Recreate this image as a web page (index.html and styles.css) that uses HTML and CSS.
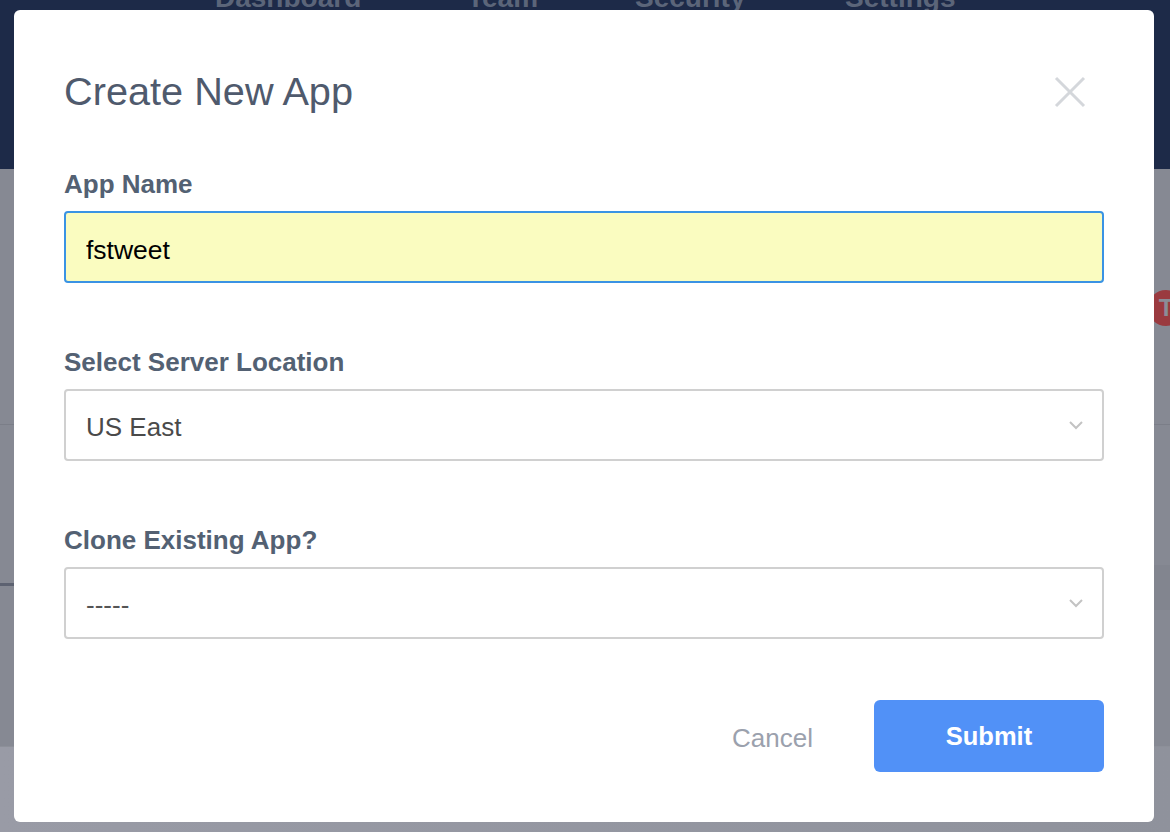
FILE: index.html
```html
<!DOCTYPE html>
<html lang="en">
<head>
<meta charset="utf-8">
<title>Create New App</title>
<link rel="stylesheet" href="styles.css">
</head>
<body>
<div class="app">
  <header class="topbar">
    <nav class="nav">
      <a class="nav-link">Dashboard</a>
      <a class="nav-link">Team</a>
      <a class="nav-link">Security</a>
      <a class="nav-link">Settings</a>
    </nav>
  </header>
  <main class="content">
    <section class="panel panel-top"><span class="avatar">T</span></section>
    <section class="panel panel-mid"><div class="chart-line"></div><div class="side-block"></div></section>
    <footer class="foot"></footer>
  </main>
</div>

<div class="overlay">
  <form class="modal">
    <div class="modal-head">
      <h1 class="modal-title">Create New App</h1>
      <button type="button" class="close" aria-label="Close">
        <svg width="32" height="32" viewBox="0 0 32 32"><path d="M2 2 L30 30 M30 2 L2 30" stroke="#d4d7db" stroke-width="3" fill="none"/></svg>
      </button>
    </div>

    <div class="field">
      <label class="label">App Name</label>
      <input class="control input" type="text" value="fstweet">
    </div>

    <div class="field">
      <label class="label">Select Server Location</label>
      <div class="select-wrap">
        <select class="control select"><option>US East</option></select>
        <svg class="chevron" width="16" height="10" viewBox="0 0 16 10"><path d="M2 2 L8 8 L14 2" stroke="#c3c3c3" stroke-width="2" fill="none"/></svg>
      </div>
    </div>

    <div class="field">
      <label class="label">Clone Existing App?</label>
      <div class="select-wrap">
        <select class="control select dashes"><option>-----</option></select>
        <svg class="chevron" width="16" height="10" viewBox="0 0 16 10"><path d="M2 2 L8 8 L14 2" stroke="#c3c3c3" stroke-width="2" fill="none"/></svg>
      </div>
    </div>

    <div class="actions">
      <button type="button" class="btn-cancel">Cancel</button>
      <button type="button" class="btn-submit">Submit</button>
    </div>
  </form>
</div>
</body>
</html>
```
FILE: styles.css
```css
* { box-sizing: border-box; }
html, body { margin: 0; padding: 0; }
body {
  font-family: "Liberation Sans", Arial, sans-serif;
  background: #868993;
  overflow: hidden;
}
.app {
  height: 832px;
  display: flex;
  flex-direction: column;
}
.topbar {
  height: 169px;
  background: #1d2a48;
  flex: none;
}
.nav {
  display: grid;
  grid-template-columns: 252px 168px 210px auto;
  padding-left: 215px;
  margin-top: -18px;
}
.nav-link {
  font-size: 28px;
  line-height: 32px;
  font-weight: bold;
  color: #5b6579;
}
.content {
  flex: 1;
  display: flex;
  flex-direction: column;
}
.panel-top {
  height: 256px;
  border-bottom: 1px solid #7b7e88;
  position: relative;
}
.avatar {
  position: absolute;
  right: -14px;
  top: 121px;
  width: 36px;
  height: 36px;
  border-radius: 50%;
  background: #9a3a3f;
  color: #8a8d97;
  font-weight: bold;
  font-size: 24px;
  line-height: 36px;
  text-align: center;
}
.panel-mid {
  flex: 1;
  position: relative;
  border-bottom: 1px solid #8d9099;
}
.chart-line {
  position: absolute;
  left: 0;
  top: 158px;
  width: 20px;
  height: 3px;
  background: #5d6271;
}
.side-block {
  position: absolute;
  right: 0;
  top: 140px;
  width: 20px;
  height: 45px;
  background: #82858f;
}
.foot {
  height: 85px;
  background: linear-gradient(90deg, #999ba6, #8f929c);
}

.overlay {
  position: fixed;
  inset: 0;
  display: flex;
  justify-content: center;
  align-items: flex-start;
  padding-top: 10px;
}
.modal {
  width: 1140px;
  height: 812px;
  margin-right: 2px;
  background: #ffffff;
  border-radius: 6px;
  padding: 57px 50px 50px;
  display: flex;
  flex-direction: column;
}
.modal-head {
  display: flex;
  justify-content: space-between;
  align-items: center;
  height: 48px;
}
.modal-title {
  margin: 0;
  font-weight: normal;
  font-size: 39.7px;
  line-height: 48px;
  color: #4f5a6d;
}
.close {
  border: 0;
  background: none;
  padding: 0;
  margin-right: 18px;
  margin-top: 2px;
  width: 32px;
  height: 32px;
  display: flex;
}
.field {
  display: flex;
  flex-direction: column;
  margin-top: 54px;
}
.field + .field { margin-top: 64px; }
.label {
  font-size: 26px;
  line-height: 30px;
  font-weight: bold;
  color: #536173;
  margin-bottom: 12px;
}
.control {
  width: 100%;
  height: 72px;
  border-radius: 4px;
  font-family: "Liberation Sans", Arial, sans-serif;
  font-size: 26px;
  padding: 0 20px;
  outline: none;
}
.input {
  border: 2px solid #3a93e4;
  background: #fafcc0;
  color: #000;
  font-size: 26.5px;
  padding-top: 6px;
}
.select-wrap {
  position: relative;
}
.select {
  appearance: none;
  -webkit-appearance: none;
  border: 2px solid #d0d0d0;
  background: #fff;
  color: #4a4a4a;
  padding-top: 3px;
}
.dashes { color: #555; }
.chevron {
  position: absolute;
  right: 20px;
  top: 31px;
  pointer-events: none;
}
.actions {
  margin-top: auto;
  display: flex;
  justify-content: flex-end;
  align-items: center;
  gap: 61px;
}
.btn-cancel {
  border: 0;
  background: none;
  font-family: "Liberation Sans", Arial, sans-serif;
  font-size: 26px;
  color: #9ba1ad;
  padding: 4px 0 0;
  height: 72px;
}
.btn-submit {
  width: 230px;
  height: 72px;
  border: 0;
  border-radius: 6px;
  background: #5191f7;
  color: #fff;
  font-family: "Liberation Sans", Arial, sans-serif;
  font-size: 25.5px;
  font-weight: bold;
}
```
